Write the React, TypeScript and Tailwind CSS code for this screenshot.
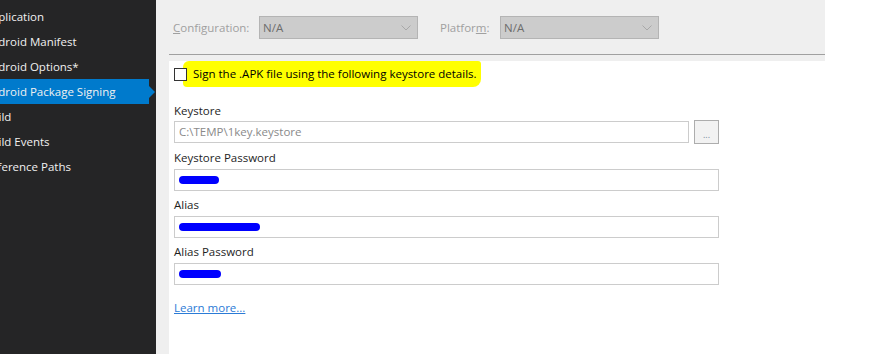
import React from "react";

const font = { fontFamily: '"Open Sans", "Noto Sans", Arial, sans-serif' };

function SidebarItem({ text, selected }: { text: string; selected?: boolean }) {
  return (
    <div className="relative h-[25px] flex items-center overflow-visible">
      {selected && (
        <>
          <div className="absolute left-0 top-0 w-[149px] h-[25px] bg-[#007acc]" />
          <div className="absolute left-[149px] top-[7px] w-0 h-0 border-y-[6px] border-y-transparent border-l-[6px] border-l-[#007acc]" />
        </>
      )}
      <span className="relative ml-[-16px] whitespace-nowrap text-[11.5px] text-[#f1f1f1]">{text}</span>
    </div>
  );
}

function Dropdown() {
  return (
    <div className="w-[159px] h-[23px] bg-[#cccccc] border border-[#b4b4b4] flex items-center justify-between pl-[3px] pr-[6px]">
      <span className="text-[11.5px] text-[#6d6d6d]">N/A</span>
      <svg width="10" height="6" viewBox="0 0 10 6">
        <path d="M0.5 0.5 L5 5 L9.5 0.5" stroke="#a8a8a8" strokeWidth="1" fill="none" />
      </svg>
    </div>
  );
}

function Blob({ w }: { w: number }) {
  return <div className="h-[8px] bg-[#0000ff] rounded-full" style={{ width: w }} />;
}

function Field({ label, children }: { label: string; children: React.ReactNode }) {
  return (
    <div className="flex flex-col">
      <div className="h-[16px] leading-[16px] text-[11.5px] text-[#1e1e1e]">{label}</div>
      <div className="mt-[3px] w-[545px] h-[22px] border border-[#cccccc] bg-white flex items-center pl-[4px]">
        {children}
      </div>
    </div>
  );
}

export default function App() {
  return (
    <div className="w-[891px] h-[359px] bg-white overflow-hidden flex flex-col" style={font}>
      <div className="flex h-[354px]">
        <div className="w-[156px] bg-[#252526] pt-[4px] overflow-hidden">
          <SidebarItem text="Application" />
          <SidebarItem text="Android Manifest" />
          <SidebarItem text="Android Options*" />
          <SidebarItem text="Android Package Signing" selected />
          <SidebarItem text="Build" />
          <SidebarItem text="Build Events" />
          <SidebarItem text="Reference Paths" />
        </div>
        <div className="w-[13px] bg-[#efefef]" />
        <div className="flex-1 flex flex-col">
          <div className="w-[656px] h-[61px] bg-[#efefef] flex flex-col">
            <div className="h-[54px] flex items-start pt-[16px] pl-[4px]">
              <span className="text-[11.5px] text-[#a0a0a0] leading-[23px] w-[86px]">
                <span className="underline">C</span>onfiguration:
              </span>
              <Dropdown />
              <span className="ml-[22px] text-[11.5px] text-[#a0a0a0] leading-[23px] w-[60px]">
                Platfor<span className="underline">m</span>:
              </span>
              <Dropdown />
            </div>
            <div className="h-px bg-[#a0a0a0]" />
          </div>
          <div className="pl-[5px] pt-[6px] flex flex-col">
            <div className="flex items-center h-[14px]">
              <div className="relative z-10 w-[13px] h-[13px] border border-[#333333] bg-white" />
              <span className="text-[11.5px] text-black bg-[#ffff00] pt-[4px] pb-[5px] pr-[4px] pl-[10px] -ml-[4px] rounded-tl-[6px] rounded-tr-[3px] rounded-bl-[4px] rounded-br-[8px]">
                Sign the .APK file using the following keystore details.
              </span>
            </div>
            <div className="mt-[22px] flex flex-col gap-[6px]">
              <div className="flex flex-col">
                <div className="h-[16px] leading-[16px] text-[11.5px] text-[#1e1e1e]">Keystore</div>
                <div className="mt-[1px] flex items-center gap-[5px]">
                  <div className="w-[515px] h-[22px] border border-[#cccccc] flex items-center pl-[4px] text-[11.5px] text-[#8a8a8a]">
                    C:\TEMP\1key.keystore
                  </div>
                  <div className="w-[25px] h-[24px] border border-[#adadad] bg-[#f2f2f2] flex items-center justify-center">
                    <span className="text-[9px] text-[#7a8aa0] leading-none mt-[4px]">...</span>
                  </div>
                </div>
              </div>
              <Field label="Keystore Password">
                <Blob w={40} />
              </Field>
              <Field label="Alias">
                <Blob w={81} />
              </Field>
              <Field label="Alias Password">
                <Blob w={42} />
              </Field>
            </div>
            <div className="mt-[13px] h-[16px] leading-[16px]">
              <span className="text-[11.5px] text-[#2b7bd6] underline">Learn more...</span>
            </div>
          </div>
        </div>
      </div>
      <div className="h-[5px] bg-white" />
    </div>
  );
}
